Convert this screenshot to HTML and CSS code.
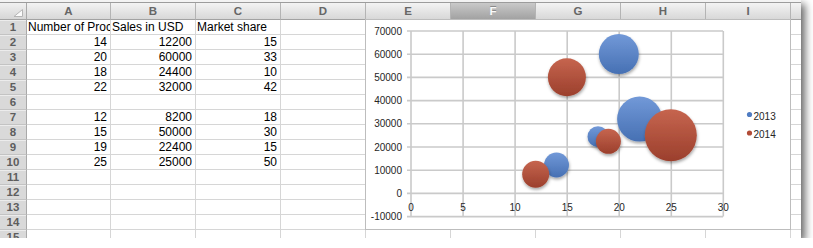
FILE: index.html
```html
<!DOCTYPE html>
<html lang="en">
<head>
  <meta charset="UTF-8">
  <title>Bubble chart sheet</title>
  <link rel="stylesheet" href="styles.css">
</head>
<body>
  <div class="window">
    <div class="topbar"></div>
    <div class="sheet">
      <div class="corner"><svg width="10" height="8" viewBox="0 0 10 8"><polygon points="9.5,0.5 9.5,7.5 1,7.5" fill="#fbfbfb" stroke="#b5b5b5" stroke-width="1"/></svg></div>
      <div class="ch">A</div><div class="ch">B</div><div class="ch">C</div><div class="ch">D</div><div class="ch">E</div><div class="ch sel">F</div><div class="ch">G</div><div class="ch">H</div><div class="ch">I</div><div class="ch end"></div>

      <div class="rh">1</div><div class="c">Number of Proc</div><div class="c">Sales in USD</div><div class="c">Market share</div><div class="c"></div><div class="c"></div><div class="c"></div><div class="c"></div><div class="c"></div><div class="c"></div><div class="c end"></div>
      <div class="rh">2</div><div class="c n">14</div><div class="c n">12200</div><div class="c n">15</div><div class="c"></div><div class="c"></div><div class="c"></div><div class="c"></div><div class="c"></div><div class="c"></div><div class="c end"></div>
      <div class="rh">3</div><div class="c n">20</div><div class="c n">60000</div><div class="c n">33</div><div class="c"></div><div class="c"></div><div class="c"></div><div class="c"></div><div class="c"></div><div class="c"></div><div class="c end"></div>
      <div class="rh">4</div><div class="c n">18</div><div class="c n">24400</div><div class="c n">10</div><div class="c"></div><div class="c"></div><div class="c"></div><div class="c"></div><div class="c"></div><div class="c"></div><div class="c end"></div>
      <div class="rh">5</div><div class="c n">22</div><div class="c n">32000</div><div class="c n">42</div><div class="c"></div><div class="c"></div><div class="c"></div><div class="c"></div><div class="c"></div><div class="c"></div><div class="c end"></div>
      <div class="rh">6</div><div class="c"></div><div class="c"></div><div class="c"></div><div class="c"></div><div class="c"></div><div class="c"></div><div class="c"></div><div class="c"></div><div class="c"></div><div class="c end"></div>
      <div class="rh">7</div><div class="c n">12</div><div class="c n">8200</div><div class="c n">18</div><div class="c"></div><div class="c"></div><div class="c"></div><div class="c"></div><div class="c"></div><div class="c"></div><div class="c end"></div>
      <div class="rh">8</div><div class="c n">15</div><div class="c n">50000</div><div class="c n">30</div><div class="c"></div><div class="c"></div><div class="c"></div><div class="c"></div><div class="c"></div><div class="c"></div><div class="c end"></div>
      <div class="rh">9</div><div class="c n">19</div><div class="c n">22400</div><div class="c n">15</div><div class="c"></div><div class="c"></div><div class="c"></div><div class="c"></div><div class="c"></div><div class="c"></div><div class="c end"></div>
      <div class="rh">10</div><div class="c n">25</div><div class="c n">25000</div><div class="c n">50</div><div class="c"></div><div class="c"></div><div class="c"></div><div class="c"></div><div class="c"></div><div class="c"></div><div class="c end"></div>
      <div class="rh">11</div><div class="c"></div><div class="c"></div><div class="c"></div><div class="c"></div><div class="c"></div><div class="c"></div><div class="c"></div><div class="c"></div><div class="c"></div><div class="c end"></div>
      <div class="rh">12</div><div class="c"></div><div class="c"></div><div class="c"></div><div class="c"></div><div class="c"></div><div class="c"></div><div class="c"></div><div class="c"></div><div class="c"></div><div class="c end"></div>
      <div class="rh">13</div><div class="c"></div><div class="c"></div><div class="c"></div><div class="c"></div><div class="c"></div><div class="c"></div><div class="c"></div><div class="c"></div><div class="c"></div><div class="c end"></div>
      <div class="rh">14</div><div class="c"></div><div class="c"></div><div class="c"></div><div class="c"></div><div class="c"></div><div class="c"></div><div class="c"></div><div class="c"></div><div class="c"></div><div class="c end"></div>
      <div class="rh">15</div><div class="c"></div><div class="c"></div><div class="c"></div><div class="c"></div><div class="c"></div><div class="c"></div><div class="c"></div><div class="c"></div><div class="c"></div><div class="c end"></div>
    </div>

    <!-- bubble chart floats over columns E-I -->
    <div class="chart">
      <svg class="plot" width="424" height="209" viewBox="366 20 424 209">
        <defs>
          <linearGradient id="blue" x1="0" y1="0" x2="0" y2="1">
            <stop offset="0" stop-color="#7299d8"/>
            <stop offset="1" stop-color="#4670b3"/>
          </linearGradient>
          <linearGradient id="red" x1="0" y1="0" x2="0" y2="1">
            <stop offset="0" stop-color="#c6654f"/>
            <stop offset="1" stop-color="#9b3f2c"/>
          </linearGradient>
          <filter id="shade" x="-30%" y="-30%" width="160%" height="170%">
            <feDropShadow dx="0.5" dy="2" stdDeviation="1.6" flood-color="#000" flood-opacity="0.35"/>
          </filter>
        </defs>

        <g class="grid">
          <path d="M407 31H723M407 54.2H723M407 77.4H723M407 100.6H723M407 123.8H723M407 147H723M407 170.2H723M407 193.4H723M407 216.6H723"/>
          <path d="M411 31V216.6M463.1 31V216.6M515.1 31V216.6M567.2 31V216.6M619.2 31V216.6M671.3 31V216.6M723.3 31V216.6"/>
        </g>

        <g class="ylab">
          <text x="402" y="34.5">70000</text>
          <text x="402" y="57.7">60000</text>
          <text x="402" y="80.9">50000</text>
          <text x="402" y="104.1">40000</text>
          <text x="402" y="127.3">30000</text>
          <text x="402" y="150.5">20000</text>
          <text x="402" y="173.7">10000</text>
          <text x="402" y="196.9">0</text>
          <text x="402" y="220.1">-10000</text>
        </g>
        <g class="xlab">
          <text x="411" y="211">0</text>
          <text x="463.1" y="211">5</text>
          <text x="515.1" y="211">10</text>
          <text x="567.2" y="211">15</text>
          <text x="619.2" y="211">20</text>
          <text x="671.3" y="211">25</text>
          <text x="723.3" y="211">30</text>
        </g>

        <g fill="url(#blue)" filter="url(#shade)">
          <circle cx="639.6" cy="119.1" r="22.5"/>
          <circle cx="618.8" cy="54.1" r="20"/>
          <circle cx="556.5" cy="165" r="12.5"/>
          <circle cx="598" cy="136.7" r="10.5"/>
        </g>
        <g fill="url(#red)" filter="url(#shade)">
          <circle cx="670.8" cy="135.3" r="26"/>
          <circle cx="566.9" cy="77.3" r="19"/>
          <circle cx="535.7" cy="174.3" r="13.5"/>
          <circle cx="608.4" cy="141.3" r="12.5"/>
        </g>

        <g class="legend">
          <circle cx="749.5" cy="114.5" r="2.6" fill="#4f7cc2"/>
          <text x="753.5" y="119.6">2013</text>
          <circle cx="749.5" cy="133" r="2.6" fill="#b24b36"/>
          <text x="753.5" y="138.1">2014</text>
        </g>
      </svg>
    </div>
  </div>
</body>
</html>
```

FILE: styles.css
```css
body { margin: 0; background: #fff; overflow: hidden; font-family: "Liberation Sans", Arial, sans-serif; }

.window { position: relative; width: 801px; height: 238px; overflow: hidden; background: #fff; box-shadow: 4px 4px 8px rgba(0, 0, 0, 0.6); }
.topbar { height: 3px; box-sizing: border-box; background: #f3f3f3; border-bottom: 1px solid #9c9c9c; }

.sheet { display: grid; grid-template-columns: 27px 84px repeat(8, 85px) 1fr; grid-template-rows: 17px; grid-auto-rows: 15px; }
.sheet > div { box-sizing: border-box; overflow: hidden; white-space: nowrap; }

.corner { display: flex; justify-content: flex-end; align-items: flex-end; padding: 0 3px 2px 0; background: linear-gradient(#f1f1f1, #d6d6d6); border-right: 1px solid #a9a9a9; border-bottom: 1px solid #a2a2a2; }
.ch { background: linear-gradient(#f3f3f3, #d8d8d8); border-right: 1px solid #b4b4b4; border-bottom: 1px solid #a2a2a2; text-align: center; font-size: 11.5px; font-weight: bold; line-height: 16px; color: #666; }
.ch.sel { background: linear-gradient(#c9c9c9, #a2a2a2); color: #fafafa; text-shadow: 0 -1px 0 #8a8a8a; }
.ch.end, .c.end { border-right: none; }

.rh { background: #d9d9d9; border-right: 1px solid #a9a9a9; border-bottom: 1px solid #c3c3c3; box-shadow: inset 0 1px #ececec; text-align: center; font-size: 11.5px; font-weight: bold; line-height: 14px; color: #5e5e5e; }
.c { border-right: 1px solid #d6d6d6; border-bottom: 1px solid #d6d6d6; padding: 0 1px; font-size: 12px; line-height: 14px; color: #000; }
.c.n { text-align: right; padding-right: 3px; }

.chart { position: absolute; left: 365px; top: 19px; width: 426px; height: 211px; box-sizing: border-box; border: 1px solid #bdbdbd; background: #fff; }
.plot { display: block; }
.grid path { fill: none; stroke: #cacaca; stroke-width: 1.6; }
.ylab text, .xlab text, .legend text { font-family: "Liberation Sans", Arial, sans-serif; font-size: 10px; fill: #262626; }
.ylab text { text-anchor: end; }
.xlab text { text-anchor: middle; }
```
